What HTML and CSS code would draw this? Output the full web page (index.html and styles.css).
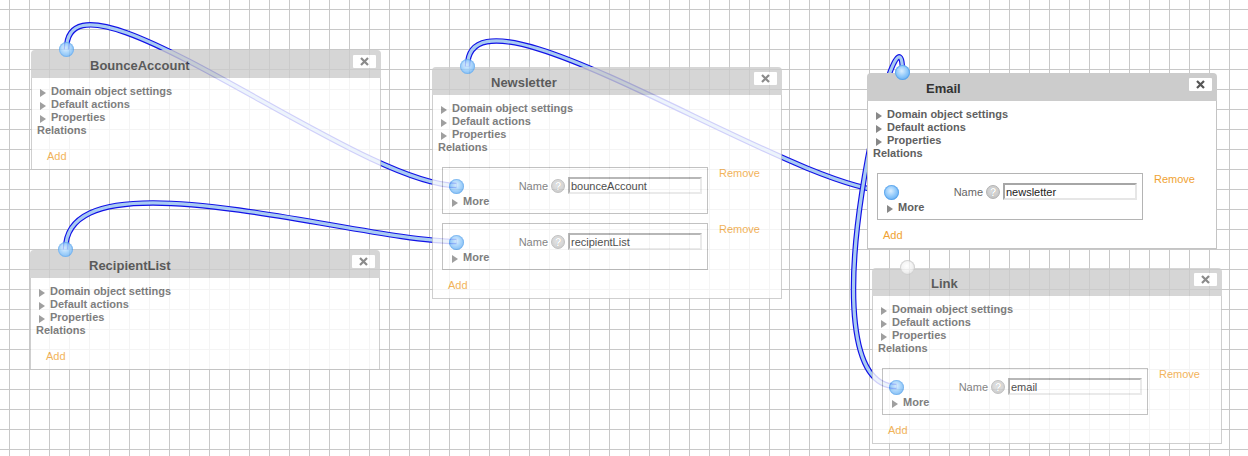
FILE: index.html
```html
<!DOCTYPE html>
<html>
<head>
<meta charset="utf-8">
<title>Editor</title>
<link rel="stylesheet" href="styles.css">
</head>
<body>
<div class="canvas">
  <svg class="wires" width="1248" height="456" viewBox="0 0 1248 456">
    <g class="wire">
      <path class="w-out" d="M66.5 49.5 C66.5 -50.5 356.5 185.5 456.5 185.5"/>
      <path class="w-in" d="M66.5 49.5 C66.5 -50.5 356.5 185.5 456.5 185.5"/>
    </g>
    <g class="wire">
      <path class="w-out" d="M65.5 249.5 C65.5 149.5 356.5 241.5 456.5 241.5"/>
      <path class="w-in" d="M65.5 249.5 C65.5 149.5 356.5 241.5 456.5 241.5"/>
    </g>
    <g class="wire">
      <path class="w-out" d="M467.5 66.5 C467.5 -33.5 791.5 191.5 891.5 191.5"/>
      <path class="w-in" d="M467.5 66.5 C467.5 -33.5 791.5 191.5 891.5 191.5"/>
    </g>
    <g class="wire">
      <path class="w-out" d="M902.5 72.5 C902.5 -27.5 796.5 386.5 896.5 386.5"/>
      <path class="w-in" d="M902.5 72.5 C902.5 -27.5 796.5 386.5 896.5 386.5"/>
    </g>
  </svg>

  <!-- BounceAccount -->
  <div class="box box-bounce">
    <span class="term term-head"></span>
    <div class="head"><span class="title">BounceAccount</span><span class="close"><svg width="9" height="9" viewBox="0 0 9 9"><path d="M1 1 L8 8 M8 1 L1 8"/></svg></span></div>
    <div class="body">
      <div class="row"><i class="tri"></i>Domain object settings</div>
      <div class="row"><i class="tri"></i>Default actions</div>
      <div class="row"><i class="tri"></i>Properties</div>
      <div class="rel-label">Relations</div>
      <div class="rel-list"></div>
      <span class="add">Add</span>
    </div>
  </div>

  <!-- RecipientList -->
  <div class="box box-recipient">
    <span class="term term-head"></span>
    <div class="head"><span class="title">RecipientList</span><span class="close"><svg width="9" height="9" viewBox="0 0 9 9"><path d="M1 1 L8 8 M8 1 L1 8"/></svg></span></div>
    <div class="body">
      <div class="row"><i class="tri"></i>Domain object settings</div>
      <div class="row"><i class="tri"></i>Default actions</div>
      <div class="row"><i class="tri"></i>Properties</div>
      <div class="rel-label">Relations</div>
      <div class="rel-list"></div>
      <span class="add">Add</span>
    </div>
  </div>

  <!-- Newsletter -->
  <div class="box box-newsletter">
    <span class="term term-head"></span>
    <div class="head"><span class="title">Newsletter</span><span class="close"><svg width="9" height="9" viewBox="0 0 9 9"><path d="M1 1 L8 8 M8 1 L1 8"/></svg></span></div>
    <div class="body">
      <div class="row"><i class="tri"></i>Domain object settings</div>
      <div class="row"><i class="tri"></i>Default actions</div>
      <div class="row"><i class="tri"></i>Properties</div>
      <div class="rel-label">Relations</div>
      <div class="rel-list">
        <div class="relation">
          <div class="item">
            <div class="item-main">
              <span class="term"></span>
              <div class="field"><span class="name">Name</span><span class="help">?</span><input class="input" type="text" value="bounceAccount"></div>
            </div>
            <div class="more"><i class="tri"></i>More</div>
          </div>
          <span class="remove">Remove</span>
        </div>
        <div class="relation">
          <div class="item">
            <div class="item-main">
              <span class="term"></span>
              <div class="field"><span class="name">Name</span><span class="help">?</span><input class="input" type="text" value="recipientList"></div>
            </div>
            <div class="more"><i class="tri"></i>More</div>
          </div>
          <span class="remove">Remove</span>
        </div>
      </div>
      <span class="add">Add</span>
    </div>
  </div>

  <!-- Email -->
  <div class="box box-email focused">
    <span class="term term-head"></span>
    <div class="head"><span class="title">Email</span><span class="close"><svg width="9" height="9" viewBox="0 0 9 9"><path d="M1 1 L8 8 M8 1 L1 8"/></svg></span></div>
    <div class="body">
      <div class="row"><i class="tri"></i>Domain object settings</div>
      <div class="row"><i class="tri"></i>Default actions</div>
      <div class="row"><i class="tri"></i>Properties</div>
      <div class="rel-label">Relations</div>
      <div class="rel-list">
        <div class="relation">
          <div class="item">
            <div class="item-main">
              <span class="term"></span>
              <div class="field"><span class="name">Name</span><span class="help">?</span><input class="input" type="text" value="newsletter"></div>
            </div>
            <div class="more"><i class="tri"></i>More</div>
          </div>
          <span class="remove">Remove</span>
        </div>
      </div>
      <span class="add">Add</span>
    </div>
  </div>

  <!-- Link -->
  <div class="box box-link">
    <span class="term term-head term-off"></span>
    <div class="head"><span class="title">Link</span><span class="close"><svg width="9" height="9" viewBox="0 0 9 9"><path d="M1 1 L8 8 M8 1 L1 8"/></svg></span></div>
    <div class="body">
      <div class="row"><i class="tri"></i>Domain object settings</div>
      <div class="row"><i class="tri"></i>Default actions</div>
      <div class="row"><i class="tri"></i>Properties</div>
      <div class="rel-label">Relations</div>
      <div class="rel-list">
        <div class="relation">
          <div class="item">
            <div class="item-main">
              <span class="term"></span>
              <div class="field"><span class="name">Name</span><span class="help">?</span><input class="input" type="text" value="email"></div>
            </div>
            <div class="more"><i class="tri"></i>More</div>
          </div>
          <span class="remove">Remove</span>
        </div>
      </div>
      <span class="add">Add</span>
    </div>
  </div>
</div>
</body>
</html>
```

FILE: styles.css
```css
* {
  box-sizing: border-box;
}

html, body {
  margin: 0;
  padding: 0;
}

body {
  width: 1248px;
  height: 456px;
  overflow: hidden;
  font-family: "Liberation Sans", Arial, sans-serif;
  background-color: #ffffff;
  background-image:
    linear-gradient(to right, #c8c8c8 1px, transparent 1px),
    linear-gradient(to bottom, #c8c8c8 1px, transparent 1px);
  background-size: 20px 20px;
  background-position: 9px 9px;
}

.canvas {
  position: relative;
  width: 1248px;
  height: 456px;
}

.wires {
  position: absolute;
  left: 0;
  top: 0;
}

.wire path {
  fill: none;
}

.w-out {
  stroke: #1212e6;
  stroke-width: 5.5;
}

.w-in {
  stroke: #a9ccf2;
  stroke-width: 3.2;
}

/* boxes placed on the free canvas */
.box {
  position: absolute;
  width: 350px;
  opacity: 0.8;
}

.box.focused {
  opacity: 1;
}

.box-bounce { left: 31px; top: 50px; }
.box-recipient { left: 30px; top: 250px; }
.box-newsletter { left: 432px; top: 67px; }
.box-email { left: 867px; top: 73px; }
.box-link { left: 872px; top: 268px; }

.head {
  position: relative;
  height: 28px;
  background: #cccccc;
  border-radius: 4px 4px 0 0;
  padding: 8px 0 0 59px;
}

.title {
  display: block;
  font-size: 13px;
  font-weight: bold;
  line-height: 16px;
  color: #333333;
}

.close {
  position: absolute;
  right: 5px;
  top: 5px;
  width: 23px;
  height: 13px;
  background: #ffffff;
  border-radius: 1px;
  display: flex;
  align-items: center;
  justify-content: center;
}

.close path {
  stroke: #6e6e6e;
  stroke-width: 2.2;
  fill: none;
}

.focused .close path {
  stroke: #555555;
}

.body {
  background: #ffffff;
  border: 1px solid #c4c4c4;
  border-top: 0;
  padding: 7px 6px 6px 5px;
  font-size: 11px;
  line-height: 13px;
  color: #606060;
}

.row {
  display: flex;
  align-items: center;
  font-weight: bold;
  height: 13px;
}

.tri {
  display: block;
  flex: none;
  width: 0;
  height: 0;
  border-left: 6px solid #888888;
  border-top: 4.5px solid transparent;
  border-bottom: 4.5px solid transparent;
  margin: 2px 5px 0 3px;
}

.rel-label {
  font-weight: bold;
  height: 13px;
}

.rel-list {
  padding-top: 13px;
}

.relation {
  display: flex;
  align-items: flex-start;
  margin-left: 4px;
  margin-bottom: 9px;
}

.item {
  width: 266px;
  height: 47px;
  border: 1px solid #b4b4b4;
  padding: 9px 5px 6px 6px;
}

.item-main {
  display: flex;
  align-items: center;
  height: 17px;
}

.field {
  margin-left: auto;
  display: flex;
  align-items: center;
  gap: 3px;
}

.name {
  color: #666666;
  font-weight: normal;
  margin-top: 1px;
}

.help {
  display: block;
  flex: none;
  width: 14px;
  height: 14px;
  margin-top: 1px;
  border-radius: 50%;
  border: 1px solid #b2b2b2;
  background: radial-gradient(circle at 50% 40%, #e4e4e4 0%, #cdcdcd 55%, #b8b8b8 100%);
  color: #ffffff;
  font-size: 11px;
  font-weight: bold;
  line-height: 12px;
  text-align: center;
  text-shadow: 0 0 1px #8a8a8a;
}

.input {
  width: 134px;
  height: 17px;
  margin: 0;
  border-style: solid;
  border-width: 2px 2px 2px 2px;
  border-color: #a6a6a6 #e6e6e6 #e6e6e6 #a6a6a6;
  padding: 0 1px;
  font-family: "Liberation Sans", Arial, sans-serif;
  font-size: 11px;
  line-height: 13px;
  color: #222222;
  background: #ffffff;
  outline: none;
}

.more {
  display: flex;
  align-items: center;
  height: 13px;
  margin-top: 1px;
  font-weight: bold;
}

.remove {
  color: #f0a232;
  margin-left: 11px;
  line-height: 13px;
}

.add {
  display: block;
  color: #f0a232;
  margin-left: 10px;
  height: 13px;
}

/* terminals */
.term {
  display: block;
  flex: none;
  width: 15px;
  height: 15px;
  border-radius: 50%;
  background: radial-gradient(circle at 45% 40%, #dcefff 0%, #94cbfb 42%, #58a6f0 85%, #4a98e6 100%);
  box-shadow: inset 0 0 0 1px rgba(70, 150, 230, 0.55);
}

.item .term {
  margin-top: 1px;
}

.term-head {
  position: absolute;
  left: 28px;
  top: -8px;
  z-index: 1;
}

.term-off {
  background: radial-gradient(circle at 45% 40%, #ffffff 0%, #f0f0f0 45%, #d4d4d4 85%, #c4c4c4 100%);
  box-shadow: inset 0 0 0 1px rgba(180, 180, 180, 0.6);
}
```
